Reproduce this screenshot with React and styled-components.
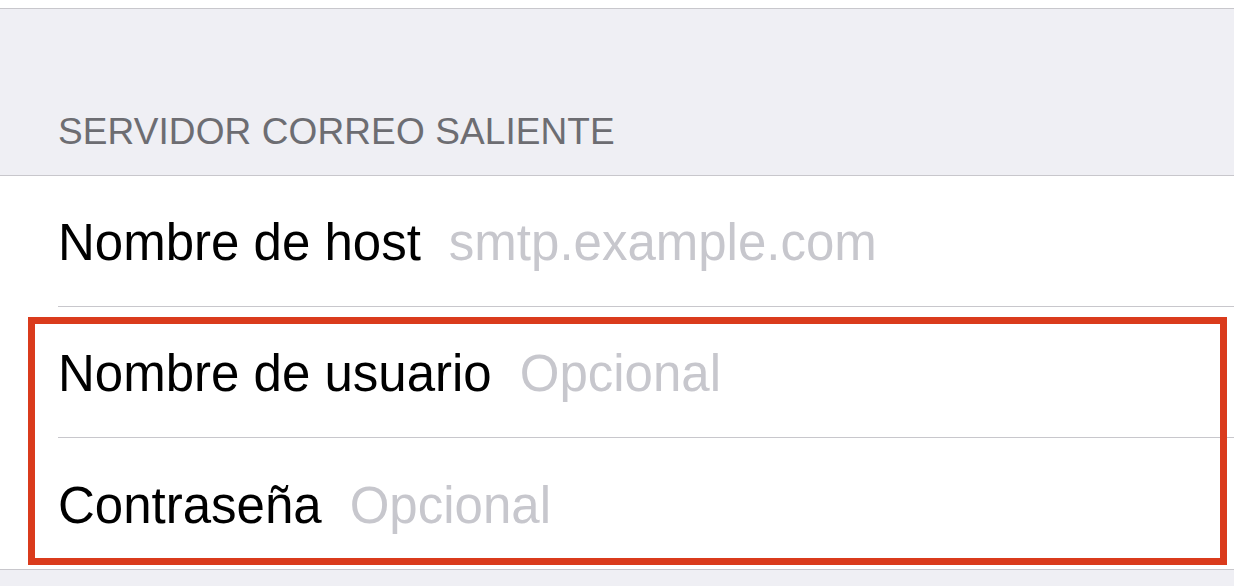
import React from 'react';
import styled, { createGlobalStyle } from 'styled-components';

const GlobalStyle = createGlobalStyle`
  html, body {
    margin: 0;
    padding: 0;
    background: #efeff4;
  }
  body {
    font-family: "Liberation Sans", Arial, sans-serif;
    -webkit-font-smoothing: antialiased;
  }
`;

const rows = [
  { label: 'Nombre de host', placeholder: 'smtp.example.com' },
  { label: 'Nombre de usuario', placeholder: 'Opcional', marked: true },
  { label: 'Contraseña', placeholder: 'Opcional', marked: true },
];

const App = () => {
  const plain = rows.filter(row => !row.marked);
  const marked = rows.filter(row => row.marked);

  return (
    <Page>
      <GlobalStyle />
      <TopStrip />
      <SectionHeader>
        <HeaderTitle>SERVIDOR CORREO SALIENTE</HeaderTitle>
      </SectionHeader>
      <Group>
        {plain.map(row => (
          <Row key={row.label}>
            <RowInner>
              <Label>{row.label}</Label>
              <Placeholder>{row.placeholder}</Placeholder>
            </RowInner>
          </Row>
        ))}
        <Highlight>
          {marked.map((row, index) => (
            <Row key={row.label}>
              <RowInner last={index === marked.length - 1}>
                <Label>{row.label}</Label>
                <Placeholder>{row.placeholder}</Placeholder>
              </RowInner>
            </Row>
          ))}
          <RedBox />
        </Highlight>
      </Group>
    </Page>
  );
};

export default App;

const Page = styled.div`
  width: 1234px;
  height: 586px;
  overflow: hidden;
  background: #efeff4;
`;

const TopStrip = styled.div`
  height: 8px;
  background: #fff;
`;

const SectionHeader = styled.header`
  display: flex;
  align-items: flex-end;
  box-sizing: border-box;
  height: 168px;
  padding: 0 0 21px 58px;
  border-top: 1px solid #c8c7cc;
  border-bottom: 1px solid #c8c7cc;
  background: #efeff4;
`;

const HeaderTitle = styled.div`
  font-size: 37px;
  line-height: 44px;
  color: #6d6d72;
  letter-spacing: 0.1px;
`;

const Group = styled.section`
  background: #fff;
  border-bottom: 1px solid #c8c7cc;
`;

const Row = styled.div`
  padding-left: 58px;
`;

const RowInner = styled.div`
  display: flex;
  align-items: center;
  gap: 28px;
  box-sizing: border-box;
  height: ${p => (p.last ? '131px' : '131px')};
  padding-top: 3px;
  border-bottom: ${p => (p.last ? 'none' : '1px solid #c8c7cc')};
`;

const Label = styled.span`
  font-size: 51px;
  line-height: 1;
  color: #000;
  white-space: nowrap;
`;

const Placeholder = styled.span`
  font-size: 51px;
  line-height: 1;
  color: #c7c7cd;
  white-space: nowrap;
`;

const Highlight = styled.div`
  position: relative;
`;

const RedBox = styled.div`
  position: absolute;
  top: 10px;
  left: 28px;
  right: 7px;
  bottom: 4px;
  border: 7px solid #da3b1c;
  pointer-events: none;
`;
